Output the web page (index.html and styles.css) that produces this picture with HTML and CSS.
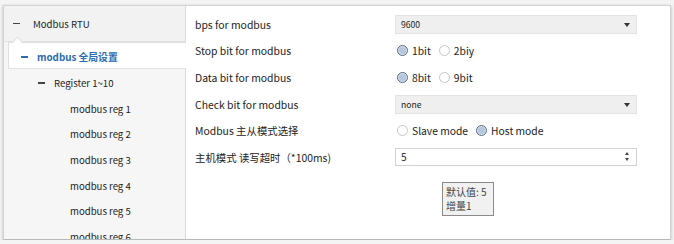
FILE: index.html
```html
<!DOCTYPE html>
<html lang="zh">
<head>
    <meta charset="UTF-8">
    <meta name="viewport" content="width=device-width, initial-scale=1.0">
    <title>Modbus 设置</title>
    <link rel="stylesheet" href="styles.css">
</head>
<body>

    <div class="frame">
        <aside class="tree">
            <div class="tree-head"><span class="dash"></span>Modbus RTU</div>
            <div class="tree-item active"><span class="notch"></span><span class="dash"></span>modbus 全局设置</div>
            <div class="tree-item group"><span class="dash"></span>Register 1~10</div>
            <div class="tree-item leaf">modbus reg 1</div>
            <div class="tree-item leaf">modbus reg 2</div>
            <div class="tree-item leaf">modbus reg 3</div>
            <div class="tree-item leaf">modbus reg 4</div>
            <div class="tree-item leaf">modbus reg 5</div>
            <div class="tree-item leaf">modbus reg 6</div>
        </aside>

        <main class="settings">
            <div class="row">
                <label>bps for modbus</label>
                <div class="select">9600<span class="caret"></span></div>
            </div>
            <div class="row">
                <label>Stop bit for modbus</label>
                <div class="radios">
                    <span class="radio checked"></span><span class="opt">1bit</span>
                    <span class="radio"></span><span class="opt">2biy</span>
                </div>
            </div>
            <div class="row">
                <label>Data bit for modbus</label>
                <div class="radios">
                    <span class="radio checked"></span><span class="opt">8bit</span>
                    <span class="radio"></span><span class="opt">9bit</span>
                </div>
            </div>
            <div class="row">
                <label>Check bit for modbus</label>
                <div class="select">none<span class="caret"></span></div>
            </div>
            <div class="row">
                <label>Modbus 主从模式选择</label>
                <div class="radios">
                    <span class="radio"></span><span class="opt">Slave mode</span>
                    <span class="radio checked"></span><span class="opt">Host mode</span>
                </div>
            </div>
            <div class="row">
                <label>主机模式 读写超时（*100ms)</label>
                <div class="number">
                    5
                    <span class="spin"><span class="up"></span><span class="down"></span></span>
                    <div class="tooltip">默认值: 5<br>增量1</div>
                </div>
            </div>
        </main>
    </div>

</body>
</html>
```

FILE: styles.css
```css
body {
    margin: 0;
    background-color: #f4f4f4;
    font-family: "Noto Sans CJK SC", "Noto Sans", sans-serif;
    font-size: 10.4px;
    color: #222;
}
.frame {
    display: flex;
    height: 233px;
    margin: 5px 3px 0 3px;
    border: 1px solid #d4d4d4;
    border-bottom-color: #b8b8b8;
    background-color: white;
    box-shadow: 0 1px 3px rgba(0, 0, 0, 0.25);
    overflow: hidden;
}

/* left tree */
.tree {
    width: 181px;
    flex-shrink: 0;
    background-color: #f6f6f6;
    border-right: 1px solid #dadada;
    font-size: 9.6px;
}
.tree-head {
    display: flex;
    align-items: center;
    height: 35px;
    padding-left: 9px;
    background-color: #f2f2f2;
    border-bottom: 1px solid #e2e2e2;
}
.tree-head .dash {
    margin-right: 13px;
}
.dash {
    display: inline-block;
    width: 7px;
    height: 1.5px;
    background-color: #444;
}
.tree-item {
    display: flex;
    align-items: center;
    height: 25.6px;
    white-space: nowrap;
}
.tree-item.active {
    position: relative;
    margin: 0 -1px 0 4px;
    padding: 3px 0 0 12px;
    background-color: white;
    border: 1px solid #e0e0e0;
    border-right: none;
    box-sizing: border-box;
    height: 27px;
    color: #2b6cb3;
    font-weight: bold;
    font-size: 9.8px;
}
.tree-item.active .dash {
    margin-right: 9px;
    background-color: #2b6cb3;
}
.notch {
    position: absolute;
    top: -5px;
    left: 5px;
    width: 6px;
    height: 6px;
    background-color: white;
    border-top: 1px solid #e0e0e0;
    border-left: 1px solid #e0e0e0;
    transform: rotate(45deg);
}
.tree-item.group {
    height: 26px;
    margin-top: 1px;
    padding-left: 34px;
}
.tree-item.group .dash {
    margin-right: 9px;
}
.tree-item.leaf {
    padding-left: 66px;
}

/* right settings */
.settings {
    flex: 1;
    display: flex;
    flex-direction: column;
    gap: 6.7px;
    padding: 8px 0 0 9px;
}
.row {
    display: flex;
    align-items: center;
    height: 20px;
}
.row label {
    width: 200px;
    white-space: nowrap;
}
.select {
    position: relative;
    width: 242px;
    height: 19px;
    line-height: 17px;
    padding-left: 5px;
    box-sizing: border-box;
    background-color: #efefef;
    border: 1px solid #e4e4e4;
    font-size: 8.6px;
}
.caret {
    position: absolute;
    right: 6px;
    top: 7px;
    border-left: 3.5px solid transparent;
    border-right: 3.5px solid transparent;
    border-top: 4px solid #333;
}
.radios {
    display: flex;
    align-items: center;
    font-size: 10.3px;
}
.radio {
    width: 9px;
    height: 9px;
    margin-left: 2px;
    margin-right: 4px;
    border-radius: 50%;
    border: 1px solid #c6c6c6;
    background-color: white;
}
.radio.checked {
    border-color: #5d6f88;
    background-color: #b6c7dc;
    box-shadow: inset 0 0 0 1px #dbe4ef;
}
.opt {
    margin-right: 6px;
}
.number {
    position: relative;
    width: 242px;
    height: 18px;
    line-height: 16px;
    padding-left: 5px;
    box-sizing: border-box;
    border: 1px solid #d2d2d2;
    font-size: 10px;
}
.spin {
    position: absolute;
    right: 7px;
    top: 3px;
    display: flex;
    flex-direction: column;
    gap: 3px;
}
.spin .up {
    border-left: 2.5px solid transparent;
    border-right: 2.5px solid transparent;
    border-bottom: 3px solid #444;
}
.spin .down {
    border-left: 2.5px solid transparent;
    border-right: 2.5px solid transparent;
    border-top: 3px solid #444;
}
.tooltip {
    position: absolute;
    left: 46px;
    top: 33px;
    width: 52px;
    padding: 2px 3px;
    box-sizing: border-box;
    background-color: #f1f1f1;
    border: 1px solid #8a8a8a;
    font-size: 10px;
    line-height: 14px;
    color: #444;
    white-space: nowrap;
}
```
